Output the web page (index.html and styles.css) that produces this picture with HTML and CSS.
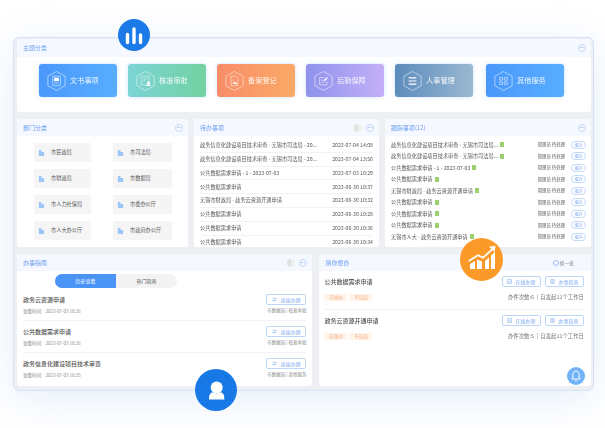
FILE: index.html
```html
<!DOCTYPE html>
<html lang="zh-CN">
<head>
  <meta charset="UTF-8" />
  <title>工作台</title>
  <link rel="stylesheet" href="styles.css">
</head>
<body>
  <div class="frame">
    <section class="card topic">
      <div class="card-head"><span>主题分类</span><i class="more"></i></div>
      <div class="tiles">
        <a class="tile t-blue">
          <svg class="hex" viewBox="0 0 22 24"><path d="M11 1l10 5.500v11L11 23 1 17.500v-11z"/><rect x="6.500" y="6.500" width="9" height="11" rx="1"/><rect x="8.500" y="8.500" width="5" height="3.500" fill="#fff"/><path d="M8.500 14.500h5"/></svg>
          <span>文书事项</span></a>
        <a class="tile t-green">
          <svg class="hex" viewBox="0 0 22 24"><path d="M11 1l10 5.500v11L11 23 1 17.500v-11z"/><path d="M6 6.500h9v10H6zM8 9.500h5M8 12h3"/><circle cx="14.500" cy="14.500" r="1.500" fill="#fff"/><path class="thick" d="M12 17.200h5"/></svg>
          <span>核准审批</span></a>
        <a class="tile t-orange">
          <svg class="hex" viewBox="0 0 22 24"><path d="M11 1l10 5.500v11L11 23 1 17.500v-11z"/><path d="M7 6.500h5.500l2.500 2.500v8.500H7zM9 11h2"/><path class="thick" d="M9 14.500h3M11.500 13l2 3"/></svg>
          <span>备案登记</span></a>
        <a class="tile t-purple">
          <svg class="hex" viewBox="0 0 22 24"><path d="M11 1l10 5.500v11L11 23 1 17.500v-11z"/><path d="M15 12v4.500H6.500V8H12M8.500 11h2M8.500 13.500h3.500"/><path class="thick" d="M11.500 12l4-4"/></svg>
          <span>后勤保障</span></a>
        <a class="tile t-steel">
          <svg class="hex" viewBox="0 0 22 24"><path d="M11 1l10 5.500v11L11 23 1 17.500v-11z"/><path class="thick" d="M6.500 8.500h9M6.500 12h9M6.500 15.500h9"/></svg>
          <span>人事管理</span></a>
        <a class="tile t-blue">
          <svg class="hex" viewBox="0 0 22 24"><path d="M11 1l10 5.500v11L11 23 1 17.500v-11z"/><path d="M6.500 8h3.500v3H6.500zM12 8h3.500v3H12zM6.500 13h3.500v3H6.500zM12 13h3.500v3H12z"/></svg>
          <span>其他服务</span></a>
      </div>
    </section>

    <div class="row row-mid">
      <section class="card">
        <div class="card-head"><span>部门分类</span><i class="more"></i></div>
        <div class="depts">
          <a class="dept"><svg viewBox="0 0 8 8"><path d="M1 8V1h3v7zM4 3.500h3V8H4z"/></svg>市民政局</a>
          <a class="dept"><svg viewBox="0 0 8 8"><path d="M1 8V1h3v7zM4 3.500h3V8H4z"/></svg>市司法局</a>
          <a class="dept"><svg viewBox="0 0 8 8"><path d="M1 8V1h3v7zM4 3.500h3V8H4z"/></svg>市财政局</a>
          <a class="dept"><svg viewBox="0 0 8 8"><path d="M1 8V1h3v7zM4 3.500h3V8H4z"/></svg>市数据局</a>
          <a class="dept"><svg viewBox="0 0 8 8"><path d="M1 8V1h3v7zM4 3.500h3V8H4z"/></svg>市人力社保局</a>
          <a class="dept"><svg viewBox="0 0 8 8"><path d="M1 8V1h3v7zM4 3.500h3V8H4z"/></svg>市委办公厅</a>
          <a class="dept"><svg viewBox="0 0 8 8"><path d="M1 8V1h3v7zM4 3.500h3V8H4z"/></svg>市人大办公厅</a>
          <a class="dept"><svg viewBox="0 0 8 8"><path d="M1 8V1h3v7zM4 3.500h3V8H4z"/></svg>市政府办公厅</a>
        </div>
      </section>

      <section class="card">
        <div class="card-head"><span>待办事项</span><i class="half"></i><i class="more"></i></div>
        <ul class="todo">
          <li><span>政务信息化建设项目技术审查 - 无锡市司法局 - 20...</span><em>2023-07-04 14:08</em></li>
          <li><span>政务信息化建设项目技术审查 - 无锡市司法局 - 20...</span><em>2023-07-04 13:56</em></li>
          <li><span>公共数据需求申请 - 1 - 2023-07-03</span><em>2023-07-03 10:29</em></li>
          <li><span>公共数据需求申请</span><em>2023-06-30 10:37</em></li>
          <li><span>无锡市财政局 - 政务云资源开通申请</span><em>2023-06-30 10:32</em></li>
          <li><span>公共数据需求申请</span><em>2023-06-30 10:28</em></li>
          <li><span>公共数据需求申请</span><em>2023-06-30 10:36</em></li>
          <li><span>公共数据需求申请</span><em>2023-06-30 10:34</em></li>
        </ul>
      </section>

      <section class="card">
        <div class="card-head"><span>跟踪事项(12)</span><i class="more"></i></div>
        <ul class="track">
          <li><span>政务信息化建设项目技术审查 - 无锡市司法局...</span><b></b><small>管理员 待处理</small><a>催办</a></li>
          <li><span>政务信息化建设项目技术审查 - 无锡市司法局...</span><b></b><small>管理员 待处理</small><a>催办</a></li>
          <li><span>公共数据需求申请 - 1 - 2023-07-03</span><b></b><small>管理员 待处理</small><a>催办</a></li>
          <li><span>公共数据需求申请</span><b></b><small>管理员 待处理</small><a>催办</a></li>
          <li><span>无锡市财政局 - 政务云资源开通申请</span><b></b><small>管理员 待处理</small><a>催办</a></li>
          <li><span>公共数据需求申请</span><b></b><small>管理员 待处理</small><a>催办</a></li>
          <li><span>公共数据需求申请</span><b></b><small>管理员 待处理</small><a>催办</a></li>
          <li><span>公共数据需求申请</span><b></b><small>管理员 待处理</small><a>催办</a></li>
          <li><span>无锡市人大 - 政务云资源开通申请</span><b></b><small>管理员 待处理</small><a>催办</a></li>
        </ul>
      </section>
    </div>

    <div class="row row-low">
      <section class="card">
        <div class="card-head"><span>办事指南</span><i class="half"></i><i class="more"></i></div>
        <div class="tabs"><a class="on">历史查看</a><a>热门指南</a></div>
        <div class="guide">
          <div class="guide-l"><h4>政务云资源申请</h4><p>查看时间：2023-07-03 10:26</p></div>
          <div class="guide-r"><a class="btn"><svg viewBox="0 0 8 8"><path d="M1 2.500h6M1 5.500h6M5.500 1L7 2.500M2.500 7L1 5.500"/></svg>直接办理</a><p>市数据局 | 核准审批</p></div>
        </div>
        <div class="guide">
          <div class="guide-l"><h4>公共数据需求申请</h4><p>查看时间：2023-07-03 10:26</p></div>
          <div class="guide-r"><a class="btn"><svg viewBox="0 0 8 8"><path d="M1 2.500h6M1 5.500h6M5.500 1L7 2.500M2.500 7L1 5.500"/></svg>直接办理</a><p>市数据局 | 核准审批</p></div>
        </div>
        <div class="guide">
          <div class="guide-l"><h4>政务信息化建设项目技术审查</h4><p>查看时间：2023-07-03 10:25</p></div>
          <div class="guide-r"><a class="btn"><svg viewBox="0 0 8 8"><path d="M1 2.500h6M1 5.500h6M5.500 1L7 2.500M2.500 7L1 5.500"/></svg>直接办理</a><p>市数据局 | 其他服务</p></div>
        </div>
      </section>

      <section class="card">
        <div class="card-head"><span>猜你想办</span><u class="swap">换一批</u></div>
        <div class="wish">
          <div class="wish-top"><h4>公共数据需求申请</h4><a class="btn"><svg viewBox="0 0 8 8"><path d="M1 1h6v6H1zM2.500 4l1.200 1.200L5.800 3"/></svg>在线办理</a><a class="btn"><svg viewBox="0 0 8 8"><path d="M1.500 1h5v6h-5zM3 3h2M3 5h2"/></svg>办事指南</a></div>
          <div class="wish-low"><span class="tag">在线办</span><span class="tag">不见面</span><p>办件次数:6&nbsp; | &nbsp;自发起11个工作日</p></div>
        </div>
        <div class="wish">
          <div class="wish-top"><h4>政务云资源开通申请</h4><a class="btn"><svg viewBox="0 0 8 8"><path d="M1 1h6v6H1zM2.500 4l1.200 1.200L5.800 3"/></svg>在线办理</a><a class="btn"><svg viewBox="0 0 8 8"><path d="M1.500 1h5v6h-5zM3 3h2M3 5h2"/></svg>办事指南</a></div>
          <div class="wish-low"><span class="tag">在线办</span><span class="tag">不见面</span><p>办件次数:5&nbsp; | &nbsp;自发起11个工作日</p></div>
        </div>
      </section>
    </div>

    <div class="float f-chart"><svg viewBox="0 0 32 32"><path d="M9.500 15.500v8M16 10v13.500M22.500 16v7.500"/></svg></div>
    <div class="float f-trend"><svg viewBox="0 0 43 43"><path class="fill" d="M10 31v-5l5-3v8zM17 31v-9.500l5 2V31zM25 31v-8l4-3.500V31zM31 31V17.500l4-3.500v17z"/><path class="line" d="M8.700 23L18 17.300l5 2.400 9.500-8.500"/><path class="fill" d="M29 8.800l6.500-1-1 6.200z"/></svg></div>
    <div class="float f-user"><svg viewBox="0 0 42 42"><circle cx="21.700" cy="18.500" r="6"/><path d="M14 30.500c0-4 .8-6.500 4-7.200 2.200 1.500 5.200 1.500 7.400 0 3.200.7 4 3.200 4 7.200z"/></svg></div>
    <div class="float f-bell"><svg viewBox="0 0 18 18"><path d="M9 4c-2.200 0-3.200 1.800-3.200 3.800v2.700L4.800 12h8.400l-1-1.500V7.800C12.200 5.800 11.200 4 9 4zM7.800 13.500c.5 1 1.900 1 2.400 0"/></svg></div>
  </div>
</body>
</html>
```

FILE: styles.css
```css
* {
  box-sizing: border-box;
}
body {
  margin: 0;
  width: 605px;
  height: 428px;
  overflow: hidden;
  padding: 37px 11px 0 13px;
  background: #fff;
  font-family: "Noto Sans CJK SC", "Noto Sans", sans-serif;
  line-height: 1.2;
  color: #555;
}
.frame {
  position: relative;
  width: 581px;
  height: 354px;
  padding: 1px 2px 0 3px;
  background: #edeff2;
  border: 1px solid #d5e3f8;
  border-radius: 6px;
  box-shadow: 0 8px 40px rgba(190, 212, 245, 0.4);
}
.frame > *:not(.float) {
  filter: blur(0.4px);
}
.card {
  background: #fff;
  border-radius: 3px;
  overflow: hidden;
}
.card-head {
  display: flex;
  align-items: center;
  gap: 4px;
  height: 17px;
  padding: 0 5px 0 6px;
  background: #f5f9ff;
  color: #6a9cf0;
  font-size: 6px;
}
.card-head span {
  margin-right: auto;
}
.more {
  position: relative;
  width: 8px;
  height: 8px;
  border: 1px solid #c5d8f4;
  border-radius: 50%;
}
.more::after {
  content: "";
  position: absolute;
  left: 1px;
  top: 2px;
  width: 4px;
  border-top: 1px dotted #a9c4ee;
}
.half {
  width: 8px;
  height: 8px;
  border-radius: 50%;
  background: linear-gradient(to right, #e0e0e0 50%, #f0f0f0 50%);
}
.topic {
  height: 73px;
}
.topic .card-head {
  height: 18px;
}
.tiles {
  display: flex;
  gap: 11px;
  padding: 7px 0 0 22px;
}
.tile {
  display: flex;
  align-items: center;
  gap: 4px;
  width: 78px;
  height: 33px;
  padding-left: 8px;
  border-radius: 3px;
  color: rgba(255, 255, 255, 0.9);
  font-size: 7.200px;
  box-shadow: 0 0 4px rgba(120, 180, 250, 0.35);
}
.tile:last-child { margin-left: 2px; }
.t-blue { background: linear-gradient(to right, #4a98fb, #57aeff); }
.t-green { background: linear-gradient(to right, #7cd4d6, #72d2a1); }
.t-orange { background: linear-gradient(to right, #f88d69, #fba966); }
.t-purple { background: linear-gradient(to right, #8f92ec, #c4b0f8); }
.t-steel { background: linear-gradient(to right, #5c8cbc, #9ab8d2); }
.hex {
  flex: none;
  width: 19px;
  height: 22px;
  fill: none;
  stroke: rgba(255, 255, 255, 0.85);
  stroke-width: 0.7;
}
.hex .thick {
  stroke: #fff;
  stroke-width: 1.400;
}
.row {
  display: flex;
  gap: 6px;
}
.row-mid {
  height: 128px;
  margin-top: 7px;
}
.row-mid .card:nth-child(1) { width: 171px; }
.row-mid .card:nth-child(2) { width: 185px; }
.row-mid .card:nth-child(3) { width: 206px; }
.row-low {
  height: 132px;
  margin-top: 7px;
}
.row-low .card:nth-child(1) { width: 296px; }
.row-low .card:nth-child(2) { width: 272px; margin-left: 1px; }
.depts {
  display: grid;
  grid-template-columns: 57px 59px;
  grid-auto-rows: 19px;
  column-gap: 22px;
  row-gap: 7px;
  padding: 7px 0 0 17px;
}
.dept {
  display: flex;
  align-items: center;
  gap: 6px;
  padding-left: 4px;
  background: #f5f5f5;
  font-size: 5.200px;
  white-space: nowrap;
}
.dept svg {
  width: 7px;
  height: 7px;
  fill: #9cc5f8;
}
ul {
  list-style: none;
  margin: 0;
}
.todo {
  padding: 3px 6px 0;
}
.todo li {
  display: flex;
  justify-content: space-between;
  align-items: center;
  height: 13.800px;
  border-bottom: 1px solid #f1f2f4;
  font-size: 5.200px;
  white-space: nowrap;
}
.todo em {
  font-style: normal;
}
.track {
  padding: 3px 5px 0 6px;
}
.track li {
  display: flex;
  align-items: center;
  height: 11.500px;
  font-size: 5.200px;
  white-space: nowrap;
}
.track b {
  width: 4px;
  height: 5px;
  margin-left: 2px;
  background: #9dd06c;
}
.track small {
  margin-left: auto;
  font-size: 4.400px;
}
.track a {
  width: 15px;
  height: 8px;
  margin-left: 6px;
  border: 1px solid #c3dbfa;
  border-radius: 4px;
  color: #7faaf0;
  font-size: 4px;
  line-height: 6px;
  text-align: center;
}
.tabs {
  display: flex;
  width: 122px;
  height: 14px;
  margin: 3px 0 0 38px;
  border-radius: 7px;
  background: #f3f3f3;
  overflow: hidden;
  font-size: 5px;
  line-height: 14px;
  text-align: center;
}
.tabs a {
  flex: 1;
}
.tabs .on {
  background: #4a94f8;
  color: #fff;
}
.guide {
  display: flex;
  justify-content: space-between;
  height: 32px;
  margin: 1px 6px -1px;
  padding-top: 5px;
  border-bottom: 1px solid #f1f2f4;
}
.guide:last-child {
  border-bottom: 0;
}
h4 {
  margin: 0;
  font-size: 6px;
  font-weight: 500;
  color: #555;
}
.guide-l {
  padding-top: 1.500px;
}
.guide-l p,
.guide-r p {
  margin: 3px 0 0;
  font-size: 4.500px;
  color: #888;
}
.guide-l p {
  margin-top: 6px;
}
.guide-r {
  width: 40px;
  text-align: right;
  white-space: nowrap;
}
.btn {
  display: inline-flex;
  align-items: center;
  justify-content: center;
  gap: 3px;
  width: 39px;
  height: 11px;
  border: 1px solid #bcd6f8;
  border-radius: 2px;
  color: #7faaf0;
  font-size: 5px;
}
.btn svg {
  width: 5px;
  height: 5px;
  fill: none;
  stroke: #7faaf0;
  stroke-width: 1;
}
.guide-r .btn {
  display: flex;
  width: 40px;
}
.swap {
  display: flex;
  align-items: center;
  gap: 1px;
  margin: 0 12px 0 auto;
  font-size: 4.800px;
  color: #8a8a8a;
  text-decoration: none;
}
.swap::before {
  content: "";
  width: 4px;
  height: 4px;
  border: 1px solid #9dbff2;
  border-radius: 50%;
}
.wish {
  height: 39px;
  margin: 0 7px 0 5px;
  padding-top: 5px;
  border-bottom: 1px solid #f1f2f4;
}
.wish:last-child {
  border-bottom: 0;
}
.wish-top {
  display: flex;
  align-items: center;
  gap: 4px;
}
.wish-top h4 {
  margin-right: auto;
}
.wish-low {
  display: flex;
  align-items: center;
  gap: 2px;
  height: 8px;
  margin-top: 6px;
}
.tag {
  width: 23px;
  height: 7px;
  background: #fff3ea;
  border-radius: 1px;
  color: #f5b183;
  font-size: 4.500px;
  line-height: 7px;
  text-align: center;
}
.wish-low p {
  margin: 0 0 0 auto;
  font-size: 5.400px;
  color: #777;
}
.float {
  position: absolute;
  border-radius: 50%;
}
.float svg {
  display: block;
  width: 100%;
  height: 100%;
}
.f-chart {
  left: 104px;
  top: -19px;
  width: 32px;
  height: 32px;
  background: #1b7ae8;
}
.f-chart path {
  fill: none;
  stroke: #fff;
  stroke-width: 3.400;
  stroke-linecap: round;
}
.f-trend {
  left: 446px;
  top: 200px;
  width: 43px;
  height: 43px;
  background: #fb9a28;
}
.f-trend .fill {
  fill: #fff;
}
.f-trend .line {
  fill: none;
  stroke: #fff;
  stroke-width: 1.800;
}
.f-user {
  left: 181px;
  top: 331px;
  width: 42px;
  height: 42px;
  background: #1879e6;
}
.f-user svg {
  fill: #fff;
}
.f-bell {
  left: 553px;
  top: 329px;
  width: 18px;
  height: 18px;
  background: #72b2f8;
}
.f-bell path {
  fill: none;
  stroke: #fff;
  stroke-width: 1;
}
```
